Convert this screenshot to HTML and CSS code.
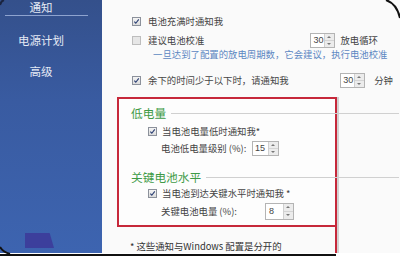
FILE: index.html
```html
<!DOCTYPE html>
<html lang="zh-CN">
<head>
<meta charset="utf-8">
<title>通知</title>
<link rel="stylesheet" href="styles.css">
</head>
<body>
<div class="page">
  <div class="window">
    <nav class="sidebar">
      <div class="nav-item nav-active">通知</div>
      <div class="nav-rule"></div>
      <div class="nav-item nav-gap">电源计划</div>
      <div class="nav-item nav-gap">高级</div>
      <div class="nav-blob"></div>
    </nav>
    <main class="main">
      <div class="row row-first">
        <span class="cb cb-on"><svg viewBox="0 0 8 8"><path d="M1.5 4.2 L3.2 6 L6.6 1.6" fill="none" stroke="#2b3f73" stroke-width="1.3"/></svg></span>
        <span class="lbl">电池充满时通知我</span>
      </div>
      <div class="row row-cycle">
        <span class="cb cb-off"></span>
        <span class="lbl">建议电池校准</span>
        <span class="spin-group">
          <span class="spin"><span class="spin-val">30</span><span class="spin-btn"><i class="up"></i><i class="down"></i></span></span>
          <span class="unit">放电循环</span>
        </span>
      </div>
      <div class="hint">一旦达到了配置的放电周期数，它会建议，执行电池校准</div>
      <div class="row row-time">
        <span class="cb cb-on"><svg viewBox="0 0 8 8"><path d="M1.5 4.2 L3.2 6 L6.6 1.6" fill="none" stroke="#2b3f73" stroke-width="1.3"/></svg></span>
        <span class="lbl">余下的时间少于以下时，请通知我</span>
        <span class="spin-group">
          <span class="spin"><span class="spin-val">30</span><span class="spin-btn"><i class="up"></i><i class="down"></i></span></span>
          <span class="unit">分钟</span>
        </span>
      </div>

      <div class="lower">
        <div class="redbox">
          <div class="group-head"><span class="group-title">低电量</span><span class="group-line"></span></div>
          <div class="sub-row sub-check">
            <span class="cb cb-on"><svg viewBox="0 0 8 8"><path d="M1.5 4.2 L3.2 6 L6.6 1.6" fill="none" stroke="#2b3f73" stroke-width="1.3"/></svg></span>
            <span class="lbl">当电池电量低时通知我*</span>
          </div>
          <div class="sub-row sub-level">
            <span class="lvl lvl-low">电池低电量级别 (%):</span>
            <span class="spin spin-low"><span class="spin-val">15</span><span class="spin-btn"><i class="up"></i><i class="down"></i></span></span>
          </div>
          <div class="group-head group-head-2"><span class="group-title">关键电池水平</span><span class="group-line"></span></div>
          <div class="sub-row sub-check sub-check-2">
            <span class="cb cb-on"><svg viewBox="0 0 8 8"><path d="M1.5 4.2 L3.2 6 L6.6 1.6" fill="none" stroke="#2b3f73" stroke-width="1.3"/></svg></span>
            <span class="lbl">当电池到达关键水平时通知我 *</span>
          </div>
          <div class="sub-row sub-level sub-level-2">
            <span class="lvl lvl-crit">关键电池电量 (%):</span>
            <span class="spin spin-crit"><span class="spin-val">8</span><span class="spin-btn"><i class="up"></i><i class="down"></i></span></span>
          </div>
        </div>
        <div class="footnote">* 这些通知与Windows 配置是分开的</div>
      </div>
    </main>
  </div>
  <div class="bottom-line"></div>
</div>
<svg class="frame" viewBox="0 0 400 257" width="400" height="257">
  <path d="M386 0 Q397 4 400 18" fill="none" stroke="#111" stroke-width="2"/>
  <path d="M0 247 Q3 252 10 254" fill="none" stroke="#111" stroke-width="2"/>
  <path d="M0 5 Q1 1 4 0" fill="none" stroke="#1a2440" stroke-width="2"/>
</svg>
</body>
</html>
```
FILE: styles.css
```css
html, body {
  margin: 0;
  padding: 0;
}
body {
  width: 400px;
  height: 257px;
  overflow: hidden;
  position: relative;
  background: #ffffff;
  font-family: "Noto Sans CJK SC", "Noto Sans", sans-serif;
  color: #444;
}
.page {
  display: flex;
  flex-direction: column;
  height: 257px;
}
.window {
  display: flex;
  height: 253px;
}
.sidebar {
  width: 102px;
  flex: none;
  display: flex;
  flex-direction: column;
  background: linear-gradient(180deg, #34508b 0%, #395ba1 40%, #3d64b0 100%);
  color: #e4e9f4;
}
.nav-item {
  width: 82px;
  text-align: center;
  font-size: 11.5px;
  line-height: 14px;
}
.nav-rule {
  margin: 1px 0 0 5px;
  width: 83px;
  height: 1px;
  background: #8ea3cf;
}
.nav-gap {
  margin-top: 17px;
}
.nav-blob {
  margin-top: auto;
  margin-bottom: 5px;
  margin-left: 25px;
  width: 29px;
  height: 15px;
  background: #3c3f9c;
  clip-path: polygon(0 0, 85% 0, 100% 100%, 0 100%);
}
.main {
  flex: 1;
  display: flex;
  flex-direction: column;
  background: #fafafa;
  padding-left: 30px;
  font-size: 9.4px;
  line-height: 14px;
}
.row {
  display: flex;
  align-items: center;
  height: 14px;
}
.row-first { margin-top: 14px; }
.row-cycle { margin-top: 5px; }
.row-time { margin-top: 12px; }
.cb {
  width: 7px;
  height: 7px;
  flex: none;
  display: flex;
  border: 1px solid #8c919b;
  background: linear-gradient(180deg, #f4f4f4, #dcdcdc);
}
.cb svg { width: 7px; height: 7px; }
.cb-off {
  border-color: #bdbdbd;
  background: #e6e6e6;
}
.row .lbl { margin-left: 7px; }
.spin-group {
  margin-left: auto;
  display: flex;
  align-items: center;
}
.row-cycle .spin-group { margin-right: 22px; }
.row-time .spin-group { margin-right: 7px; }
.row-time .unit { margin-left: 9px; }
.row-cycle .unit { margin-left: 5px; }
.spin {
  display: flex;
  width: 25px;
  height: 15px;
  box-sizing: border-box;
  border: 1px solid #b4b4b4;
  background: #fff;
  flex: none;
}
.spin-val {
  flex: 1;
  padding-left: 2px;
  font-family: "Liberation Sans", sans-serif;
  font-size: 9px;
  line-height: 13px;
  color: #444;
}
.spin-btn {
  width: 9px;
  display: flex;
  flex-direction: column;
  border-left: 1px solid #d0d0d0;
}
.spin-btn i {
  flex: 1;
  position: relative;
  background: #ececec;
}
.spin-btn i.up { border-bottom: 1px solid #d4d4d4; }
.spin-btn i::after {
  content: "";
  position: absolute;
  left: 2px;
  top: 2px;
  border-left: 2px solid transparent;
  border-right: 2px solid transparent;
}
.spin-btn i.up::after { border-bottom: 2px solid #777; }
.spin-btn i.down::after { border-top: 2px solid #777; }
.hint {
  margin-left: 21px;
  color: #5c87c2;
  line-height: 14px;
}
.lower {
  margin-top: 10px;
  margin-left: -15px;
  width: 220px;
  flex: 1;
  box-sizing: border-box;
  border-right: 2px solid #c6283a;
  box-shadow: 2px 0 0 #d2d2d2;
  display: flex;
  flex-direction: column;
}
.redbox {
  border: 2px solid #c6283a;
  border-right: none;
  padding: 7px 0 7px 12px;
  background: #fdfdfd;
}
.group-head {
  display: flex;
  align-items: center;
  height: 14px;
}
.group-head-2 { margin-top: 15px; }
.group-title {
  color: #3f9b47;
  font-size: 11.7px;
}
.group-line {
  flex: 1;
  height: 1px;
  background: #d0d0d0;
  margin-left: 5px;
  margin-right: -64px;
}
.sub-row {
  display: flex;
  align-items: center;
  height: 14px;
  padding-left: 17px;
}
.sub-check { margin-top: 4px; }
.sub-check-2 { margin-top: 2px; }
.sub-check .lbl { margin-left: 5px; }
.sub-level { margin-top: 3px; padding-left: 30px; }
.sub-level-2 { margin-top: 4px; }
.lvl-low { width: 91px; flex: none; }
.lvl-crit { width: 104px; flex: none; }
.spin-low { width: 27px; }
.spin-crit { width: 29px; height: 17px; }
.spin-crit .spin-val { line-height: 15px; padding-left: 3px; }
.footnote {
  margin-top: 12px;
  padding-left: 13px;
  color: #333;
}
.bottom-line {
  width: 336px;
  height: 2px;
  margin-top: 1px;
  background: #111;
}
.frame {
  position: absolute;
  left: 0;
  top: 0;
  pointer-events: none;
}
```
